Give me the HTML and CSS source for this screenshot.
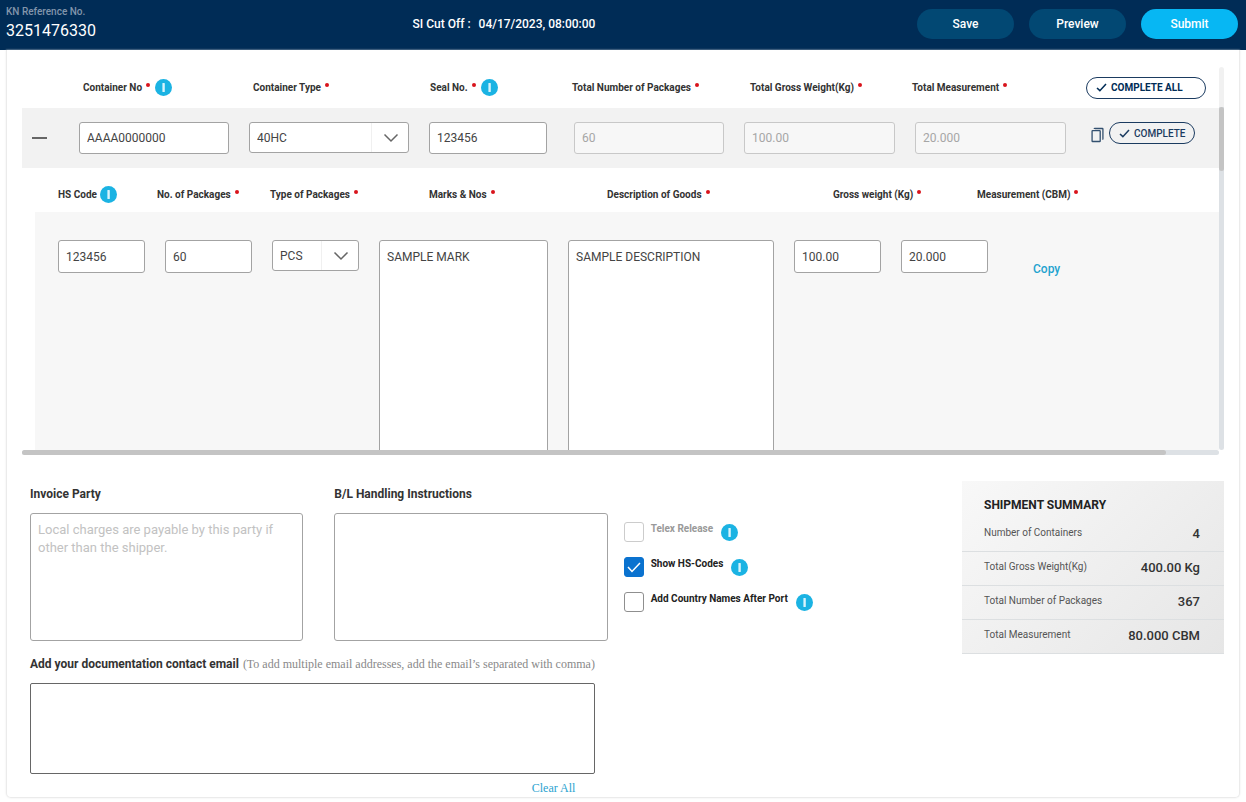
FILE: index.html
```html
<!DOCTYPE html>
<html lang="en">
<head>
<meta charset="utf-8">
<title>Shipping Instruction 3251476330</title>
<link rel="stylesheet" href="styles.css">
</head>
<body>
<svg class="sprite" aria-hidden="true">
  <symbol id="info" viewBox="0 0 17 17"><circle cx="8.500" cy="8.500" r="8.500" fill="#1bb3e3"/><rect x="7.400" y="4" width="2.400" height="9" rx=".6" fill="#d9f3fc"/></symbol>
  <symbol id="chevron" viewBox="0 0 16 10"><path d="M1.500 1.500 8 8l6.500-6.500" fill="none" stroke="#666" stroke-width="1.500"/></symbol>
  <symbol id="tick" viewBox="0 0 12 10"><path d="M1 5.500 4.200 8.500 11 1.200" fill="none" stroke="currentColor" stroke-width="1.700"/></symbol>
</svg>

<header class="topbar">
  <div class="ref">
    <span class="ref-label">KN Reference No.</span>
    <span class="ref-value">3251476330</span>
  </div>
  <div class="cutoff"><span>SI Cut Off :</span><span>04/17/2023, 08:00:00</span></div>
  <div class="actions">
    <button class="btn" type="button">Save</button>
    <button class="btn" type="button">Preview</button>
    <button class="btn btn-primary" type="button">Submit</button>
  </div>
</header>

<main class="card">
  <section class="grid-scroller">
    <div class="viewport">
      <div class="row-labels">
        <span></span>
        <span class="col-label"><label for="cno">Container No</label><i class="req"></i><svg class="info"><use href="#info"/></svg></span>
        <span class="col-label"><label for="ctype">Container Type</label><i class="req"></i></span>
        <span class="col-label"><label for="seal">Seal No.</label><i class="req"></i><svg class="info"><use href="#info"/></svg></span>
        <span class="col-label"><label for="tpk">Total Number of Packages</label><i class="req"></i></span>
        <span class="col-label"><label for="tgw">Total Gross Weight(Kg)</label><i class="req"></i></span>
        <span class="col-label"><label for="tms">Total Measurement</label><i class="req"></i></span>
        <button class="pill pill-all" type="button"><svg class="tick"><use href="#tick"/></svg>COMPLETE ALL</button>
      </div>
      <div class="container-row">
        <button class="collapse" type="button" aria-label="Collapse container"><span></span></button>
        <div class="cell"><input class="field" id="cno" value="AAAA0000000"></div>
        <div class="cell"><div class="select"><select id="ctype"><option>40HC</option></select><span class="arrow"><svg class="chevron"><use href="#chevron"/></svg></span></div></div>
        <div class="cell cell-seal"><input class="field" id="seal" value="123456"></div>
        <div class="cell"><input class="field" id="tpk" value="60" disabled></div>
        <div class="cell"><input class="field" id="tgw" value="100.00" disabled></div>
        <div class="cell"><input class="field" id="tms" value="20.000" disabled></div>
        <div class="row-actions">
          <button class="copy-btn" type="button" aria-label="Copy container"><svg class="copy" viewBox="0 0 12 14"><path d="M1 3.500q0-.5.5-.5H8q.5 0 .5.500v9q0 .5-.5.500H1.500q-.5 0-.5-.5zM3 1.500Q3 1 3.500 1h7q.5 0 .5.500v9q0 .5-.5.500" fill="none" stroke="#33506f" stroke-width="1.200"/></svg></button>
          <button class="pill" type="button"><svg class="tick"><use href="#tick"/></svg>COMPLETE</button>
        </div>
      </div>

      <div class="goods-labels">
        <span class="col-label"><label for="hs">HS Code</label><svg class="info info-near"><use href="#info"/></svg></span>
        <span class="col-label"><label for="npk">No. of Packages</label><i class="req"></i></span>
        <span class="col-label"><label for="ptype">Type of Packages</label><i class="req"></i></span>
        <span class="col-label"><label for="marks">Marks &amp; Nos</label><i class="req"></i></span>
        <span class="col-label"><label for="desc">Description of Goods</label><i class="req"></i></span>
        <span class="col-label"><label for="gw">Gross weight (Kg)</label><i class="req"></i></span>
        <span class="col-label"><label for="cbm">Measurement (CBM)</label><i class="req"></i></span>
      </div>
      <div class="goods-row">
        <div class="cell"><input class="field" id="hs" value="123456"></div>
        <div class="cell"><input class="field" id="npk" value="60"></div>
        <div class="cell"><div class="select"><select id="ptype"><option>PCS</option></select><span class="arrow"><svg class="chevron"><use href="#chevron"/></svg></span></div></div>
        <div class="cell"><textarea class="area area-goods" id="marks">SAMPLE MARK</textarea></div>
        <div class="cell"><textarea class="area area-goods" id="desc">SAMPLE DESCRIPTION</textarea></div>
        <div class="cell"><input class="field" id="gw" value="100.00"></div>
        <div class="cell cell-cbm"><input class="field" id="cbm" value="20.000"></div>
        <a class="copy-link" href="#copy">Copy</a>
      </div>
    </div>
    <div class="vbar"><div class="vthumb"></div></div>
    <div class="hbar"><div class="hthumb"></div></div>
  </section>

  <section class="lower">
    <div class="notes">
      <div class="note">
        <label class="title" for="invoice">Invoice Party</label>
        <textarea class="area" id="invoice" placeholder="Local charges are payable by this party if other than the shipper."></textarea>
      </div>
      <div class="note">
        <label class="title" for="bl">B/L Handling Instructions</label>
        <textarea class="area" id="bl"></textarea>
      </div>
      <div class="checks">
        <div class="check check-off"><input type="checkbox" id="telex" disabled><label for="telex">Telex Release</label><svg class="info"><use href="#info"/></svg></div>
        <div class="check"><input type="checkbox" id="showhs" checked><label for="showhs">Show HS-Codes</label><svg class="info"><use href="#info"/></svg></div>
        <div class="check"><input type="checkbox" id="country"><label for="country">Add Country Names After Port</label><svg class="info"><use href="#info"/></svg></div>
      </div>
    </div>

    <aside class="summary">
      <h2>SHIPMENT SUMMARY</h2>
      <dl>
        <div><dt>Number of Containers</dt><dd>4</dd></div>
        <div><dt>Total Gross Weight(Kg)</dt><dd>400.00 Kg</dd></div>
        <div><dt>Total Number of Packages</dt><dd>367</dd></div>
        <div><dt>Total Measurement</dt><dd>80.000 CBM</dd></div>
      </dl>
    </aside>

    <div class="email">
      <div class="email-head"><label class="title" for="mail">Add your documentation contact email</label><span class="hint">(To add multiple email addresses, add the email’s separated with comma)</span></div>
      <textarea class="area area-mail" id="mail"></textarea>
      <a class="clear" href="#clear">Clear All</a>
    </div>
  </section>
</main>
</body>
</html>
```

FILE: styles.css
```css
* { box-sizing: border-box; }

body {
  margin: 0;
  background: #fff;
  color: #333;
  font-family: Roboto, "Liberation Sans", sans-serif;
  font-size: 12px;
}

button, input, select, textarea { font: inherit; color: inherit; margin: 0; }
button { cursor: pointer; }
.sprite { display: none; }

/* top bar */
.topbar {
  display: grid;
  grid-template-columns: 33% 1fr auto;
  align-items: center;
  height: 50px;
  padding: 0 8px 2px 6px;
  background: #002c56;
  color: #fff;
}
.ref { display: flex; flex-direction: column; }
.ref-label { font-size: 10px; line-height: 14px; font-weight: 500; color: #8295ab; }
.ref-value { font-size: 16px; line-height: 24px; }
.cutoff { display: flex; gap: 8px; font-weight: 500; }
.actions { display: flex; gap: 15px; }
.btn {
  width: 97px;
  height: 30px;
  padding: 0;
  border: 0;
  border-radius: 15px;
  background: #024873;
  color: #fff;
  font-weight: 500;
}
.btn-primary { background: #07b7f3; }

/* card */
.card {
  margin: 0 6px 4px;
  padding: 17px 15px 0;
  border: 1px solid #ebebeb;
  border-top: 0;
  border-radius: 0 0 5px 5px;
  box-shadow: 0 0 2px #e8e8e8;
}

/* container grid with its scroll bars */
.grid-scroller {
  display: grid;
  grid-template-columns: minmax(0, 1fr) 5px;
  grid-template-rows: 383px 5px;
}
.viewport { overflow: hidden; }
.vbar { padding-top: 40px; background: linear-gradient(#f1f1f1 40px, #dde1e5 40px); border-radius: 3px; }
.vthumb { height: 64px; background: #c4c4c4; border-radius: 3px; }
.hbar { background: #dde1e5; border-radius: 3px; }
.hthumb { width: 95.6%; height: 5px; background: #c4c4c4; border-radius: 3px; }

.row-labels {
  display: grid;
  grid-template-columns: 61px 170fr 177fr 142fr 178fr 162fr 174fr 133px;
  align-items: center;
  height: 41px;
}
.col-label {
  display: flex;
  align-items: center;
  font-size: 10px;
  font-weight: 700;
  white-space: nowrap;
}
.req { width: 4px; height: 4px; margin: 0 0 6px 4px; border-radius: 50%; background: #d8141c; }
.info { flex: none; width: 17px; height: 17px; margin-left: 5px; }
.info-near { margin-left: 3px; }

.container-row {
  display: grid;
  grid-template-columns: 57px 170fr 180fr 145fr 170fr 171fr 171fr 133px;
  height: 60px;
  padding-top: 14px;
  background: #f2f2f2;
}
.cell { padding-right: 20px; }
.cell-seal { padding-right: 27px; }
.field {
  display: block;
  width: 100%;
  height: 32px;
  padding: 0 7px;
  border: 1px solid #a3a3a3;
  border-radius: 3px;
  background: #fff;
  color: #444;
}
.field:disabled { border-color: #c8c8c8; background: #f7f7f7; color: #a6a6a6; }

.select { display: grid; height: 31px; }
.select > * { grid-area: 1 / 1; }
.select select {
  appearance: none;
  width: 100%;
  padding: 0 7px;
  border: 1px solid #a3a3a3;
  border-radius: 3px;
  background: #fff;
  color: #444;
}
.arrow {
  display: flex;
  justify-content: center;
  align-items: center;
  justify-self: end;
  width: 38px;
  margin: 1px 0;
  border-left: 1px solid #f0f0f0;
  pointer-events: none;
}
.chevron { width: 16px; height: 10px; }

.collapse { width: 35px; height: 32px; padding: 0 0 0 10px; border: 0; background: none; }
.collapse span { display: block; width: 15px; height: 2px; background: #666; }

.pill {
  display: flex;
  align-items: center;
  gap: 4px;
  width: 86px;
  height: 22px;
  padding: 0 9px;
  border: 1px solid #1b3b60;
  border-radius: 11px;
  background: transparent;
  color: #1b3b60;
  font-size: 10px;
  font-weight: 500;
  white-space: nowrap;
}
.pill-all { width: 120px; background: #fff; color: #002c56; font-weight: 700; }
.tick { flex: none; width: 11px; height: 9px; }
.row-actions { display: flex; align-items: flex-start; gap: 5px; padding-left: 5px; }
.copy-btn { height: 21px; padding: 4px 0 0; border: 0; background: none; }
.copy { display: block; width: 13px; height: 16px; }

/* goods lines */
.goods-labels {
  display: grid;
  grid-template-columns: 99fr 113fr 159fr 178fr 226fr 144fr 242fr;
  align-items: center;
  height: 44px;
  padding: 9px 0 0 36px;
}
.goods-row {
  display: grid;
  grid-template-columns: 107fr 107fr 107fr 189fr 226fr 107fr 132fr 186fr;
  margin-left: 13px;
  padding: 28px 0 0 23px;
  background: #f7f7f7;
}
.goods-row .field { height: 33px; }
.cell-cbm { padding-right: 45px; }
.area {
  display: block;
  width: 100%;
  height: 128px;
  padding: 7px;
  border: 1px solid #a3a3a3;
  border-radius: 3px;
  background: #fff;
  color: #444;
  line-height: 18px;
  resize: none;
}
.area::placeholder { color: #c2c2c2; font-size: 13px; }
.area-goods { height: 240px; }
.copy-link { margin-top: 22px; color: #1fa3cf; font-weight: 500; text-decoration: none; }

/* lower part */
.lower {
  display: grid;
  grid-template-columns: minmax(0, 1fr) 262px;
  column-gap: 20px;
  padding: 26px 0 0 8px;
}
.notes { display: grid; grid-template-columns: 273fr 273fr 303fr; column-gap: 31px; }
.title { font-size: 12px; line-height: 16px; font-weight: 700; color: #333; }
.note { padding-top: 5px; }
.note .title { display: block; margin-bottom: 11px; }
.checks { display: flex; flex-direction: column; gap: 15px; margin-left: -15px; padding-top: 41px; }
.check { display: flex; height: 20px; font-size: 10px; line-height: 13px; font-weight: 700; color: #222; }
.check input {
  appearance: none;
  width: 20px;
  height: 20px;
  margin-right: 7px;
  border: 1px solid #8f8f8f;
  border-radius: 3px;
  background: #fff;
}
.check input:checked {
  border-color: #0a72cf;
  background: #0a72cf url("data:image/svg+xml,%3Csvg xmlns='http://www.w3.org/2000/svg' viewBox='0 0 18 18'%3E%3Cpath d='M3 9l4 4.500L15 5' fill='none' stroke='white' stroke-width='1.500'/%3E%3C/svg%3E");
}
.check .info { margin: 2px 0 0 8px; }
.check-off { color: #999; }
.check-off input { border-color: #ccc; }

.summary { align-self: start; background: linear-gradient(135deg, #f8f8f8, #e6e6e6); }
.summary h2 { margin: 0; padding: 16px 22px 0; font-size: 12px; line-height: 16px; font-weight: 700; color: #222; }
.summary dl { margin: 5px 0 0; }
.summary dl div {
  display: flex;
  justify-content: space-between;
  height: 34px;
  padding: 8px 24px 0 22px;
  border-bottom: 1px solid #dcdfe1;
}
.summary dt { font-size: 10px; line-height: 14px; color: #555; }
.summary dd { margin: 0; font-size: 13px; line-height: 16px; font-weight: 500; }

.email { width: 62%; margin-top: 1px; }
.email-head { display: flex; align-items: baseline; gap: 4px; margin-bottom: 10px; white-space: nowrap; }
.hint { font: 12px/18px "Liberation Serif", serif; color: #888; }
.area-mail { height: 91px; border-color: #666; border-radius: 2px; }
.clear {
  display: block;
  width: max-content;
  margin: 6px 20px 0 auto;
  color: #2ba3d0;
  font: 12px/17px "Liberation Serif", serif;
  text-decoration: none;
}
```
